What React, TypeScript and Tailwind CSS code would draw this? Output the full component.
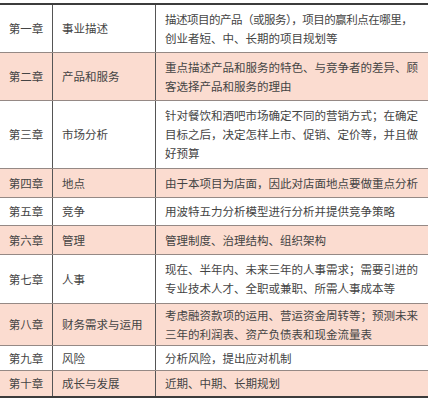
import React from "react";

type Row = { ch: string; title: string; lines: React.ReactNode[]; h: string; peach: boolean };

const rows: Row[] = [
  {
    ch: "第一章",
    title: "事业描述",
    lines: [
      <span className="tracking-[-0.5px]">描述项目的产品（或服务），项目的赢利点在哪里，</span>,
      "创业者短、中、长期的项目规划等",
    ],
    h: "h-[48px]",
    peach: false,
  },
  {
    ch: "第二章",
    title: "产品和服务",
    lines: ["重点描述产品和服务的特色、与竞争者的差异、顾", "客选择产品和服务的理由"],
    h: "h-[48px]",
    peach: true,
  },
  {
    ch: "第三章",
    title: "市场分析",
    lines: [
      "针对餐饮和酒吧市场确定不同的营销方式；在确定",
      "目标之后，决定怎样上市、促销、定价等，并且做",
      "好预算",
    ],
    h: "h-[68px]",
    peach: false,
  },
  {
    ch: "第四章",
    title: "地点",
    lines: ["由于本项目为店面，因此对店面地点要做重点分析"],
    h: "h-[29px]",
    peach: true,
  },
  {
    ch: "第五章",
    title: "竞争",
    lines: ["用波特五力分析模型进行分析并提供竞争策略"],
    h: "h-[28px]",
    peach: false,
  },
  {
    ch: "第六章",
    title: "管理",
    lines: ["管理制度、治理结构、组织架构"],
    h: "h-[29px]",
    peach: true,
  },
  {
    ch: "第七章",
    title: "人事",
    lines: ["现在、半年内、未来三年的人事需求；需要引进的", "专业技术人才、全职或兼职、所需人事成本等"],
    h: "h-[49px]",
    peach: false,
  },
  {
    ch: "第八章",
    title: "财务需求与运用",
    lines: ["考虑融资款项的运用、营运资金周转等；预测未来", "三年的利润表、资产负债表和现金流量表"],
    h: "h-[42px]",
    peach: true,
  },
  {
    ch: "第九章",
    title: "风险",
    lines: ["分析风险，提出应对机制"],
    h: "h-[25px]",
    peach: false,
  },
  {
    ch: "第十章",
    title: "成长与发展",
    lines: ["近期、中期、长期规划"],
    h: "h-[25px]",
    peach: true,
  },
];

export default function App() {
  return (
    <div
      className="w-[428px] h-[400px] bg-white pt-[3px] text-[#444] text-[11.5px] leading-[19px] overflow-hidden"
      style={{ fontFamily: '"Noto Sans CJK SC", "Noto Sans", sans-serif' }}
    >
      <div className="border-t-2 border-b-2 border-[#3c3c3c]">
        {rows.map((r, i) => (
          <div
            key={i}
            className={`flex ${r.h} ${r.peach ? "bg-[#fbdcd0]" : "bg-white"} ${
              i < rows.length - 1 ? "border-b border-[#958985]" : ""
            }`}
          >
            <div className="w-[53px] shrink-0 border-r border-[#555] flex items-center justify-center whitespace-nowrap">
              {r.ch}
            </div>
            <div className="w-[103px] shrink-0 border-r border-[#555] flex items-center pl-[9px] whitespace-nowrap">
              {r.title}
            </div>
            <div className="flex-1 flex flex-col justify-center pl-[9px] whitespace-nowrap">
              {r.lines.map((l, j) => (
                <div key={j}>{l}</div>
              ))}
            </div>
          </div>
        ))}
      </div>
    </div>
  );
}
